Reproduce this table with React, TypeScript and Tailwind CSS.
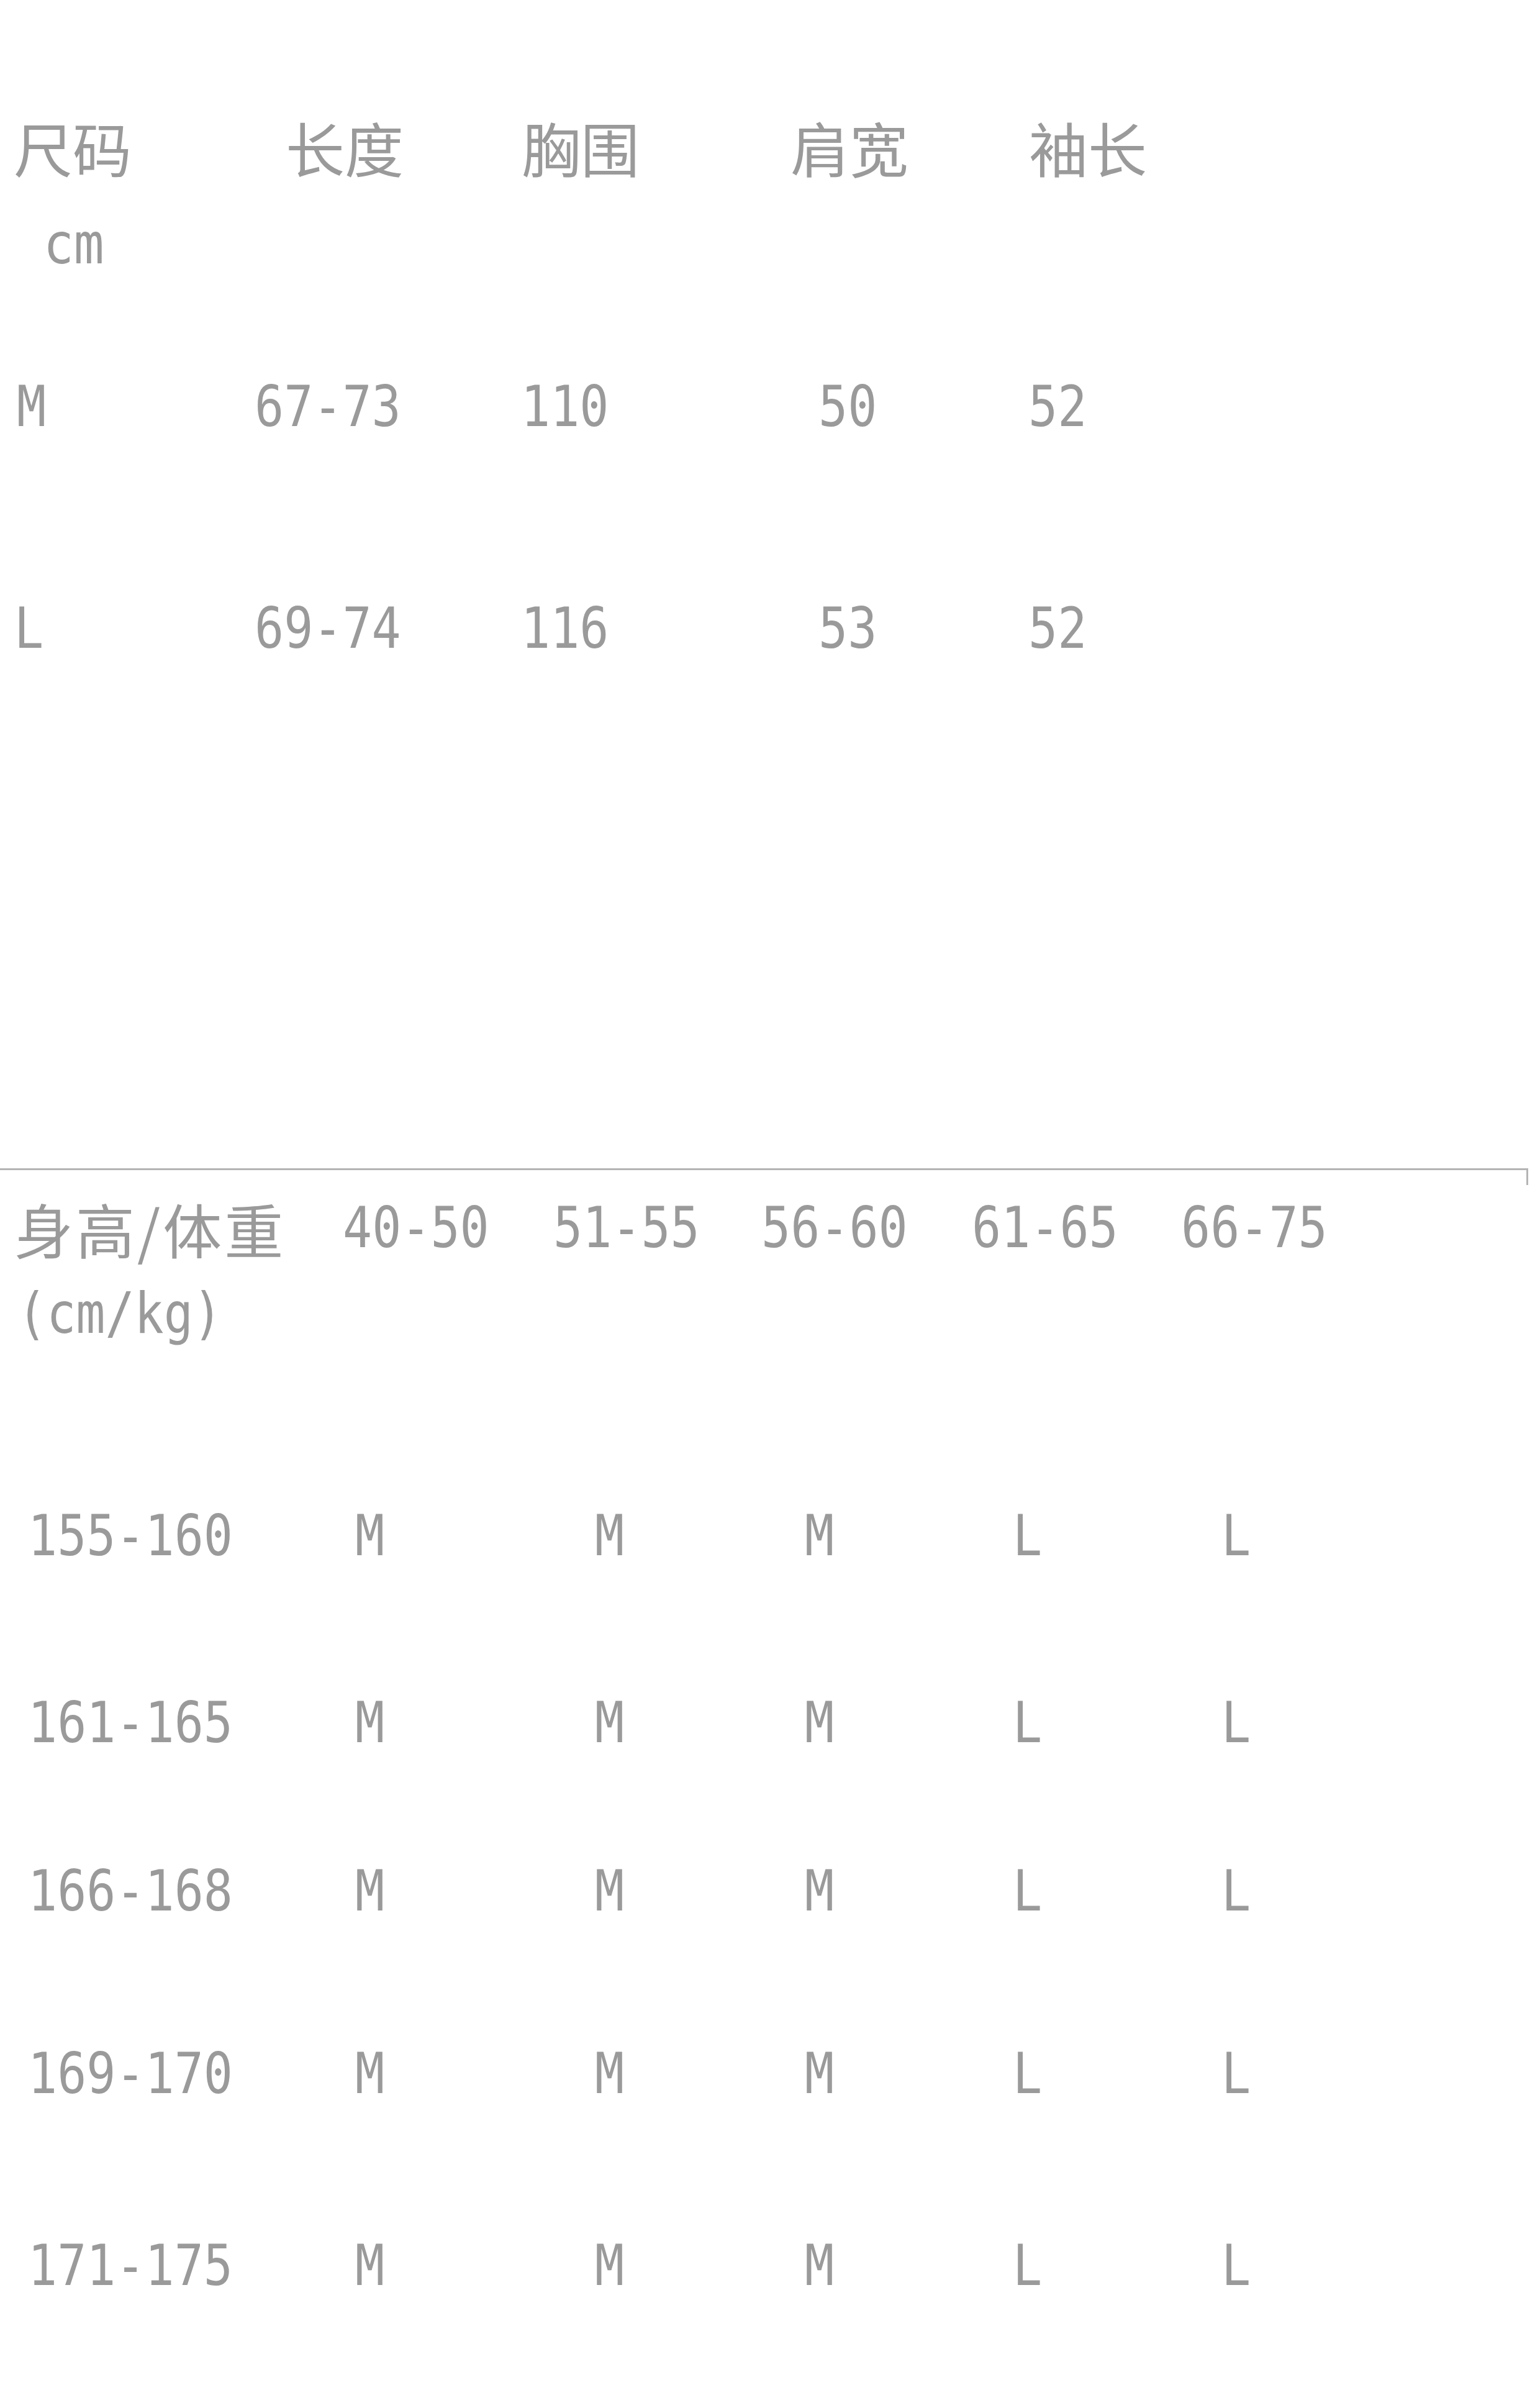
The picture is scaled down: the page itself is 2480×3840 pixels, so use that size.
import React from "react";

const cjk = "font-['Noto_Sans_CJK_SC',sans-serif] text-[95px] leading-none";
const lat =
  "inline-block origin-left scale-x-[0.87] font-['DejaVu_Sans_Mono','Noto_Sans_CJK_SC',monospace] text-[90px] leading-none";

function L({ children }: { children: React.ReactNode }) {
  return <span className={lat}>{children}</span>;
}
function C({ children }: { children: React.ReactNode }) {
  return <span className={cjk}>{children}</span>;
}

export default function App() {
  return (
    <div className="w-[2480px] h-[3840px] bg-white text-[#9a9a9a] overflow-hidden flex flex-col">
      {/* table 1 */}
      <div className="h-[156px] shrink-0" />
      <div className="h-[160px] shrink-0 flex items-center pl-[22px]">
        <div className="w-[438px] shrink-0"><C>尺码</C></div>
        <div className="w-[380px] shrink-0"><C>长度</C></div>
        <div className="w-[433px] shrink-0"><C>胸围</C></div>
        <div className="w-[384px] shrink-0"><C>肩宽</C></div>
        <div className="shrink-0"><C>袖长</C></div>
      </div>
      <div className="h-[154px] shrink-0 flex items-center pl-[70px]">
        <span className="inline-block origin-left scale-x-[0.9] font-['DejaVu_Sans_Mono',monospace] text-[90px] leading-none">cm</span>
      </div>
      <div className="h-[370px] shrink-0 flex items-center pl-[27px]">
        <div className="w-[383px] shrink-0"><L>M</L></div>
        <div className="w-[429px] shrink-0"><L>67-73</L></div>
        <div className="w-[479px] shrink-0"><L>110</L></div>
        <div className="w-[338px] shrink-0"><L>50</L></div>
        <div className="shrink-0"><L>52</L></div>
      </div>
      <div className="h-[344px] shrink-0 flex items-center pl-[23px]">
        <div className="w-[387px] shrink-0"><L>L</L></div>
        <div className="w-[429px] shrink-0"><L>69-74</L></div>
        <div className="w-[479px] shrink-0"><L>116</L></div>
        <div className="w-[338px] shrink-0"><L>53</L></div>
        <div className="shrink-0"><L>52</L></div>
      </div>
      <div className="h-[697px] shrink-0" />

      {/* divider */}
      <div className="h-[27px] w-[2461px] shrink-0 border-t-[3px] border-r-[3px] border-[#b4b4b4]" />

      {/* table 2 */}
      <div className="h-[138px] shrink-0 flex items-center pl-[23px]">
        <div className="w-[529px] shrink-0">
          <span className={`${cjk} tracking-[4px]`}>身高/体重</span>
        </div>
        <div className="w-[339px] shrink-0"><L>40-50</L></div>
        <div className="w-[335px] shrink-0"><L>51-55</L></div>
        <div className="w-[339px] shrink-0"><L>56-60</L></div>
        <div className="w-[337px] shrink-0"><L>61-65</L></div>
        <div className="shrink-0"><L>66-75</L></div>
      </div>
      <div className="h-[138px] shrink-0 flex items-center pl-[28px]">
        <L>(cm/kg)</L>
      </div>
      <div className="h-[139px] shrink-0" />
      {[
        { label: "155-160", h: "h-[300px]" },
        { label: "161-165", h: "h-[302px]" },
        { label: "166-168", h: "h-[240px]" },
        { label: "169-170", h: "h-[348px]" },
        { label: "171-175", h: "h-[270px]" },
      ].map((r) => (
        <div key={r.label} className={`${r.h} shrink-0 flex items-center pl-[45px]`}>
          <div className="w-[527px] shrink-0"><L>{r.label}</L></div>
          <div className="w-[386px] shrink-0"><L>M</L></div>
          <div className="w-[338px] shrink-0"><L>M</L></div>
          <div className="w-[335px] shrink-0"><L>M</L></div>
          <div className="w-[336px] shrink-0"><L>L</L></div>
          <div className="shrink-0"><L>L</L></div>
        </div>
      ))}
    </div>
  );
}
